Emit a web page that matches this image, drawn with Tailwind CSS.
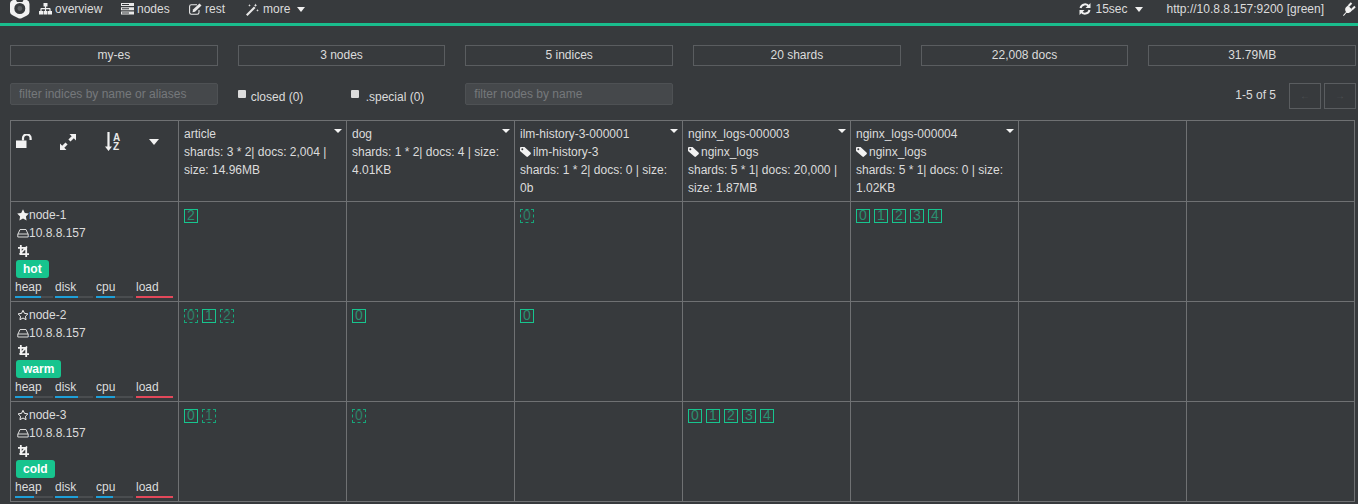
<!DOCTYPE html>
<html>
<head>
<meta charset="utf-8">
<script src="https://cdn.jsdelivr.net/npm/@tailwindcss/browser@4"></script>
</head>
<body class="bg-[#373a3d] overflow-hidden">
<div class="w-[1366px] h-[504px] overflow-hidden bg-[#373a3d] text-[#dcdcdc] text-[12px] leading-[18px] font-['Liberation_Sans',Arial,sans-serif]">

  <!-- nav -->
  <nav class="h-[26px] border-b-[3px] border-[#19bd8d] flex items-start justify-between">
    <div class="flex items-center h-[18px]">
      <svg class="ml-[10px] w-[20px] h-[20px] -mt-[1px]" viewBox="0 0 20 20"><path fill="#f2f2f2" fill-rule="evenodd" d="M5.500 0 L7 3 L12.500 3 L14 0 L17 1 Q19.500 2 19.500 5 L19.500 13 Q19.500 15 17 16.500 L12 19 Q10 20 8 19 L3 16.500 Q0 15 0 13 L0 5 Q0 2 3 1 Z M9.800 4 A5.500 5.500 0 1 0 9.800 15 A5.500 5.500 0 1 0 9.800 4 Z"/><circle cx="9.800" cy="9.500" r="2.400" fill="#5a5d60"/></svg>
      <div class="ml-[9px] flex items-center gap-[3px] w-[82px]">
        <svg class="w-[13px] h-[12px]" viewBox="0 0 13 12"><path fill="#f0f0f0" d="M4.500 0h4v3.500h-1.400v1.600h3.600c.5 0 .9.4.9.9v2h1.400v3.500H9v-3.500h1.400V6.300H7.100v1.700h1.400v3.500h-4V8h1.400V6.300H2.600V8H4v3.500H0V8h1.400V6c0-.5.4-.9.9-.9h3.600V3.500H4.500z"/></svg>
        <span>overview</span>
      </div>
      <div class="flex items-center gap-[3px] w-[68px]">
        <svg class="w-[13px] h-[12px]" viewBox="0 0 13 12"><path fill="#e8e8e8" d="M0 0h13v3H0zM0 4.300h13v3H0zM0 8.600h13v3H0z"/><path fill="#373a3d" d="M1 1h7v1H1zM1 5.300h7v1H1zM1 9.600h7v1H1z"/></svg>
        <span>nodes</span>
      </div>
      <div class="flex items-center gap-[3px] w-[57px]">
        <svg class="w-[13px] h-[12px]" viewBox="0 0 13 12"><path fill="none" stroke="#e8e8e8" stroke-width="1.100" d="M10 7v2.500c0 1-.7 1.700-1.700 1.700H2.300c-1 0-1.700-.7-1.700-1.700V3.500c0-1 .7-1.700 1.700-1.700H8"/><path fill="#e8e8e8" d="M4 6.500 10.500 0.500 12.500 2.500 6 8.800 3.500 9.200z"/></svg>
        <span>rest</span>
      </div>
      <div class="flex items-center">
        <svg class="w-[13px] h-[13px]" viewBox="0 0 13 13"><path fill="#e8e8e8" d="M0 11.500 8 3.500 9.500 5 1.500 13z"/><path fill="#e8e8e8" d="M9.500 0.500l.5 1.200 1.200.5-1.200.5-.5 1.200-.5-1.200-1.200-.5 1.200-.5zM3.500 1l.4 1 1 .4-1 .4-.4 1-.4-1-1-.4 1-.4zM11.500 6l.4 1 1 .4-1 .4-.4 1-.4-1-1-.4 1-.4z"/></svg>
        <span class="ml-[4px]">more</span>
        <svg class="ml-[7px] w-[8px] h-[5px]" viewBox="0 0 8 5"><path fill="#f0f0f0" d="M0 0h8L4 5z"/></svg>
      </div>
    </div>
    <div class="flex items-center h-[18px] pr-[10px]">
      <svg class="w-[12px] h-[12px]" viewBox="0 0 12 12"><path fill="none" stroke="#f0f0f0" stroke-width="2" d="M1.500 5A4.700 4.700 0 0 1 10 3.500M10.500 7A4.700 4.700 0 0 1 2 8.500"/><path fill="#f0f0f0" d="M11.500 0v5h-5zM.5 12V7h5z"/></svg>
      <span class="ml-[5px]">15sec</span>
      <svg class="ml-[7px] w-[8px] h-[5px]" viewBox="0 0 8 5"><path fill="#f0f0f0" d="M0 0h8L4 5z"/></svg>
      <span class="ml-[24px]">http://10.8.8.157:9200 [green]</span>
      <svg class="ml-[19px] w-[13px] h-[14px]" viewBox="0 0 13 14"><path fill="#f2f2f2" d="M0 13.200 3 10C1.600 8 2 6 3.500 4.800L5 3.500 9.500 8 8 9.500C6.800 10.800 5 11.500 3.500 10.700L.8 14z"/><path fill="none" stroke="#f2f2f2" stroke-width="2" d="M5.500 4 8.500 1M9 7.500 12 4.500"/></svg>
    </div>
  </nav>

  <div class="px-[10px] pt-[19px]">
    <!-- stats -->
    <div class="grid grid-cols-6 gap-x-[20px]">
      <div class="h-[21px] pb-[2px] border border-[#5a5d60] flex items-center justify-center">my-es</div>
      <div class="h-[21px] pb-[2px] border border-[#5a5d60] flex items-center justify-center">3 nodes</div>
      <div class="h-[21px] pb-[2px] border border-[#5a5d60] flex items-center justify-center">5 indices</div>
      <div class="h-[21px] pb-[2px] border border-[#5a5d60] flex items-center justify-center">20 shards</div>
      <div class="h-[21px] pb-[2px] border border-[#5a5d60] flex items-center justify-center">22,008 docs</div>
      <div class="h-[21px] pb-[2px] border border-[#5a5d60] flex items-center justify-center">31.79MB</div>
    </div>

    <!-- filters -->
    <div class="grid grid-cols-6 gap-x-[20px] mt-[17px] h-[26px]">
      <input class="h-[22px] px-[8px] rounded-[2px] bg-[#45484b] border border-[#4e5154] text-[12px] placeholder:text-[#75787b] outline-none" placeholder="filter indices by name or aliases">
      <div class="flex items-start">
        <label class="flex items-start w-[113px]">
          <span class="mt-[7px] w-[8px] h-[8px] rounded-[1px] bg-[#dcdcdc]"></span>
          <span class="ml-[5px] mt-[5px] whitespace-nowrap">closed (0)</span>
        </label>
        <label class="flex items-start">
          <span class="mt-[7px] w-[8px] h-[8px] rounded-[1px] bg-[#dcdcdc]"></span>
          <span class="ml-[7px] mt-[5px] whitespace-nowrap">.special (0)</span>
        </label>
      </div>
      <input class="h-[22px] px-[8px] rounded-[2px] bg-[#45484b] border border-[#4e5154] text-[12px] placeholder:text-[#75787b] outline-none" placeholder="filter nodes by name">
      <div class="col-span-3 flex items-start justify-end">
        <span class="mt-[3px] mr-[13px]">1-5 of 5</span>
        <button class="w-[32px] h-[26px] border border-[#5a5d60] text-[#4c4f52] text-[10px] leading-none">←</button>
        <button class="ml-[3px] w-[32px] h-[26px] border border-[#5a5d60] text-[#4c4f52] text-[10px] leading-none">→</button>
      </div>
    </div>

    <!-- table -->
    <div class="mt-[11px] w-[1345px] border-l border-t border-[#6f7173] grid grid-cols-[168px_168px_168px_168px_168px_168px_168px_168px] grid-rows-[81px_100px_100px_100px] [&>div]:border-r [&>div]:border-b [&>div]:border-[#6f7173]">

      <!-- header -->
      <div class="flex items-start pt-[13px]">
        <svg class="ml-[5px] w-[16px] h-[14px]" viewBox="0 0 16 14"><path fill="#f2f2f2" d="M0 6.500h10.500V14H0z"/><path fill="none" stroke="#f2f2f2" stroke-width="2.200" d="M7 6.500V4.200a3.500 3.500 0 0 1 7.600 0V6"/></svg>
        <svg class="ml-[28px] w-[16px] h-[16px]" viewBox="0 0 16 16"><path fill="#f2f2f2" d="M9.500 0H16v6.500l-2.200-2.200L10.500 7.600 8.400 5.500l3.300-3.300zM6.500 16H0V9.500l2.200 2.200 3.300-3.300 2.100 2.100-3.300 3.300z"/></svg>
        <div class="ml-[29px] -mt-[2px] w-[16px] h-[20px] flex">
          <svg class="w-[7px] h-[19px]" viewBox="0 0 7 19"><path fill="#f2f2f2" d="M2.400 0h2.200v14.500H7L3.500 19 0 14.500h2.400z"/></svg>
          <div class="ml-[1px] mt-[1px] flex flex-col text-[10px] leading-[9px] font-bold text-[#e8e8e8]"><span>A</span><span>Z</span></div>
        </div>
        <svg class="ml-[28px] mt-[5px] w-[10px] h-[6px]" viewBox="0 0 10 6"><path fill="#f2f2f2" d="M0 0h10L5 6z"/></svg>
      </div>

      <div class="relative px-[5px] pt-[4px]"><svg class="absolute right-[4px] top-[8px] w-[8px] h-[4px]" viewBox="0 0 8 4"><path fill="#f4f4f4" d="M0 0h8L4 4z"/></svg>article<br>shards: 3 * 2| docs: 2,004 |<br>size: 14.96MB</div>
      <div class="relative px-[5px] pt-[4px]"><svg class="absolute right-[4px] top-[8px] w-[8px] h-[4px]" viewBox="0 0 8 4"><path fill="#f4f4f4" d="M0 0h8L4 4z"/></svg>dog<br>shards: 1 * 2| docs: 4 | size:<br>4.01KB</div>
      <div class="relative px-[5px] pt-[4px]"><svg class="absolute right-[4px] top-[8px] w-[8px] h-[4px]" viewBox="0 0 8 4"><path fill="#f4f4f4" d="M0 0h8L4 4z"/></svg>ilm-history-3-000001<br><svg class="inline w-[11px] h-[10px] mr-[2px] align-[-1px]" viewBox="0 0 11 10"><path fill="#f2f2f2" d="M0 1.200C0 .5.500 0 1.200 0H4.500l6 5.600c.5.500.5 1.100 0 1.600L8 9.600c-.5.500-1.100.5-1.600 0L0 4z"/><circle cx="2.300" cy="2.300" r="1" fill="#373a3d"/></svg>ilm-history-3<br>shards: 1 * 2| docs: 0 | size:<br>0b</div>
      <div class="relative px-[5px] pt-[4px]"><svg class="absolute right-[4px] top-[8px] w-[8px] h-[4px]" viewBox="0 0 8 4"><path fill="#f4f4f4" d="M0 0h8L4 4z"/></svg>nginx_logs-000003<br><svg class="inline w-[11px] h-[10px] mr-[2px] align-[-1px]" viewBox="0 0 11 10"><path fill="#f2f2f2" d="M0 1.200C0 .5.500 0 1.200 0H4.500l6 5.600c.5.500.5 1.100 0 1.600L8 9.600c-.5.500-1.100.5-1.600 0L0 4z"/><circle cx="2.300" cy="2.300" r="1" fill="#373a3d"/></svg>nginx_logs<br>shards: 5 * 1| docs: 20,000 |<br>size: 1.87MB</div>
      <div class="relative px-[5px] pt-[4px]"><svg class="absolute right-[4px] top-[8px] w-[8px] h-[4px]" viewBox="0 0 8 4"><path fill="#f4f4f4" d="M0 0h8L4 4z"/></svg>nginx_logs-000004<br><svg class="inline w-[11px] h-[10px] mr-[2px] align-[-1px]" viewBox="0 0 11 10"><path fill="#f2f2f2" d="M0 1.200C0 .5.500 0 1.200 0H4.500l6 5.600c.5.500.5 1.100 0 1.600L8 9.600c-.5.500-1.100.5-1.600 0L0 4z"/><circle cx="2.300" cy="2.300" r="1" fill="#373a3d"/></svg>nginx_logs<br>shards: 5 * 1| docs: 0 | size:<br>1.02KB</div>
      <div></div>
      <div></div>

      <!-- node 1 -->
      <div class="pt-[4px]">
        <div class="pl-[6px] flex items-center"><svg class="w-[12px] h-[12px]" viewBox="0 0 12 12"><path fill="#f2f2f2" d="M6 .3l1.800 3.700 4 .6-2.900 2.800.7 4L6 9.500l-3.600 1.900.7-4L.2 4.600l4-.6z"/></svg>node-1</div>
        <div class="pl-[6px] flex items-center"><svg class="w-[12px] h-[12px]" viewBox="0 0 12 12"><path fill="none" stroke="#dcdcdc" d="M1 7 3 2.500h6L11 7M.8 7h10.400v3H.8z"/></svg>10.8.8.157</div>
        <div class="pl-[7px] h-[18px] flex items-center"><svg class="w-[11px] h-[12px]" viewBox="0 0 11 12"><path fill="none" stroke="#f2f2f2" stroke-width="1.800" d="M2.800 0v9.200H11M0 2.800h8.200V12M9 1.500 1.500 9.500"/></svg></div>
        <div class="ml-[5px] block w-fit h-[18px] rounded-[3px] bg-[#17c48e] px-[7px] font-bold text-white leading-[18px]">hot</div>
        <div class="ml-[4px] grid grid-cols-[38px_38px_38px_38px] gap-x-[2px]">
          <div><div>heap</div><div class="h-[2px] bg-[#4a4d50]"><div class="h-full bg-[#1e9fd8] w-[68%]"></div></div></div>
          <div><div>disk</div><div class="h-[2px] bg-[#4a4d50]"><div class="h-full bg-[#1e9fd8] w-[60%]"></div></div></div>
          <div class="ml-[1px]"><div>cpu</div><div class="h-[2px] bg-[#4a4d50]"><div class="h-full bg-[#1e9fd8] w-[50%]"></div></div></div>
          <div class="ml-[1px]"><div>load</div><div class="h-[2px] bg-[#e2485a]"></div></div>
        </div>
      </div>
      <div class="px-[5px] pt-[7px] flex items-start gap-[4px]"><span class="w-[14px] h-[14px] border border-[#17c48e] text-[#2a8f70] text-[14px] text-center leading-[11px]">2</span></div>
      <div></div>
      <div class="px-[5px] pt-[7px] flex items-start gap-[4px]"><span class="w-[14px] h-[14px] border border-dashed border-[#17a57a] text-[#2e7d66] text-[14px] text-center leading-[11px]">0</span></div>
      <div></div>
      <div class="px-[5px] pt-[7px] flex items-start gap-[4px]"><span class="w-[14px] h-[14px] border border-[#17c48e] text-[#2a8f70] text-[14px] text-center leading-[11px]">0</span><span class="w-[14px] h-[14px] border border-[#17c48e] text-[#2a8f70] text-[14px] text-center leading-[11px]">1</span><span class="w-[14px] h-[14px] border border-[#17c48e] text-[#2a8f70] text-[14px] text-center leading-[11px]">2</span><span class="w-[14px] h-[14px] border border-[#17c48e] text-[#2a8f70] text-[14px] text-center leading-[11px]">3</span><span class="w-[14px] h-[14px] border border-[#17c48e] text-[#2a8f70] text-[14px] text-center leading-[11px]">4</span></div>
      <div></div>
      <div></div>

      <!-- node 2 -->
      <div class="pt-[4px]">
        <div class="pl-[6px] flex items-center"><svg class="w-[12px] h-[12px]" viewBox="0 0 12 12"><path fill="none" stroke="#f2f2f2" d="M6 1.300l1.500 3.100 3.400.5-2.450 2.400.6 3.400L6 9l-3.050 1.700.6-3.400L1.100 4.900l3.400-.5z"/></svg>node-2</div>
        <div class="pl-[6px] flex items-center"><svg class="w-[12px] h-[12px]" viewBox="0 0 12 12"><path fill="none" stroke="#dcdcdc" d="M1 7 3 2.500h6L11 7M.8 7h10.400v3H.8z"/></svg>10.8.8.157</div>
        <div class="pl-[7px] h-[18px] flex items-center"><svg class="w-[11px] h-[12px]" viewBox="0 0 11 12"><path fill="none" stroke="#f2f2f2" stroke-width="1.800" d="M2.800 0v9.200H11M0 2.800h8.200V12M9 1.500 1.500 9.500"/></svg></div>
        <div class="ml-[5px] block w-fit h-[18px] rounded-[3px] bg-[#17c48e] px-[7px] font-bold text-white leading-[18px]">warm</div>
        <div class="ml-[4px] grid grid-cols-[38px_38px_38px_38px] gap-x-[2px]">
          <div><div>heap</div><div class="h-[2px] bg-[#4a4d50]"><div class="h-full bg-[#1e9fd8] w-[47%]"></div></div></div>
          <div><div>disk</div><div class="h-[2px] bg-[#4a4d50]"><div class="h-full bg-[#1e9fd8] w-[60%]"></div></div></div>
          <div class="ml-[1px]"><div>cpu</div><div class="h-[2px] bg-[#4a4d50]"><div class="h-full bg-[#1e9fd8] w-[50%]"></div></div></div>
          <div class="ml-[1px]"><div>load</div><div class="h-[2px] bg-[#e2485a]"></div></div>
        </div>
      </div>
      <div class="px-[5px] pt-[7px] flex items-start gap-[4px]"><span class="w-[14px] h-[14px] border border-dashed border-[#17a57a] text-[#2e7d66] text-[14px] text-center leading-[11px]">0</span><span class="w-[14px] h-[14px] border border-[#17c48e] text-[#2a8f70] text-[14px] text-center leading-[11px]">1</span><span class="w-[14px] h-[14px] border border-dashed border-[#17a57a] text-[#2e7d66] text-[14px] text-center leading-[11px]">2</span></div>
      <div class="px-[5px] pt-[7px] flex items-start gap-[4px]"><span class="w-[14px] h-[14px] border border-[#17c48e] text-[#2a8f70] text-[14px] text-center leading-[11px]">0</span></div>
      <div class="px-[5px] pt-[7px] flex items-start gap-[4px]"><span class="w-[14px] h-[14px] border border-[#17c48e] text-[#2a8f70] text-[14px] text-center leading-[11px]">0</span></div>
      <div></div>
      <div></div>
      <div></div>
      <div></div>

      <!-- node 3 -->
      <div class="pt-[4px]">
        <div class="pl-[6px] flex items-center"><svg class="w-[12px] h-[12px]" viewBox="0 0 12 12"><path fill="none" stroke="#f2f2f2" d="M6 1.300l1.500 3.100 3.400.5-2.450 2.400.6 3.400L6 9l-3.050 1.700.6-3.400L1.100 4.900l3.400-.5z"/></svg>node-3</div>
        <div class="pl-[6px] flex items-center"><svg class="w-[12px] h-[12px]" viewBox="0 0 12 12"><path fill="none" stroke="#dcdcdc" d="M1 7 3 2.500h6L11 7M.8 7h10.400v3H.8z"/></svg>10.8.8.157</div>
        <div class="pl-[7px] h-[18px] flex items-center"><svg class="w-[11px] h-[12px]" viewBox="0 0 11 12"><path fill="none" stroke="#f2f2f2" stroke-width="1.800" d="M2.800 0v9.200H11M0 2.800h8.200V12M9 1.500 1.500 9.500"/></svg></div>
        <div class="ml-[5px] block w-fit h-[18px] rounded-[3px] bg-[#17c48e] px-[7px] font-bold text-white leading-[18px]">cold</div>
        <div class="ml-[4px] grid grid-cols-[38px_38px_38px_38px] gap-x-[2px]">
          <div><div>heap</div><div class="h-[2px] bg-[#4a4d50]"><div class="h-full bg-[#1e9fd8] w-[50%]"></div></div></div>
          <div><div>disk</div><div class="h-[2px] bg-[#4a4d50]"><div class="h-full bg-[#1e9fd8] w-[60%]"></div></div></div>
          <div class="ml-[1px]"><div>cpu</div><div class="h-[2px] bg-[#4a4d50]"><div class="h-full bg-[#1e9fd8] w-[47%]"></div></div></div>
          <div class="ml-[1px]"><div>load</div><div class="h-[2px] bg-[#e2485a]"></div></div>
        </div>
      </div>
      <div class="px-[5px] pt-[7px] flex items-start gap-[4px]"><span class="w-[14px] h-[14px] border border-[#17c48e] text-[#2a8f70] text-[14px] text-center leading-[11px]">0</span><span class="w-[14px] h-[14px] border border-dashed border-[#17a57a] text-[#2e7d66] text-[14px] text-center leading-[11px]">1</span></div>
      <div class="px-[5px] pt-[7px] flex items-start gap-[4px]"><span class="w-[14px] h-[14px] border border-dashed border-[#17a57a] text-[#2e7d66] text-[14px] text-center leading-[11px]">0</span></div>
      <div></div>
      <div class="px-[5px] pt-[7px] flex items-start gap-[4px]"><span class="w-[14px] h-[14px] border border-[#17c48e] text-[#2a8f70] text-[14px] text-center leading-[11px]">0</span><span class="w-[14px] h-[14px] border border-[#17c48e] text-[#2a8f70] text-[14px] text-center leading-[11px]">1</span><span class="w-[14px] h-[14px] border border-[#17c48e] text-[#2a8f70] text-[14px] text-center leading-[11px]">2</span><span class="w-[14px] h-[14px] border border-[#17c48e] text-[#2a8f70] text-[14px] text-center leading-[11px]">3</span><span class="w-[14px] h-[14px] border border-[#17c48e] text-[#2a8f70] text-[14px] text-center leading-[11px]">4</span></div>
      <div></div>
      <div></div>
      <div></div>
    </div>
  </div>
</div>
</body>
</html>
